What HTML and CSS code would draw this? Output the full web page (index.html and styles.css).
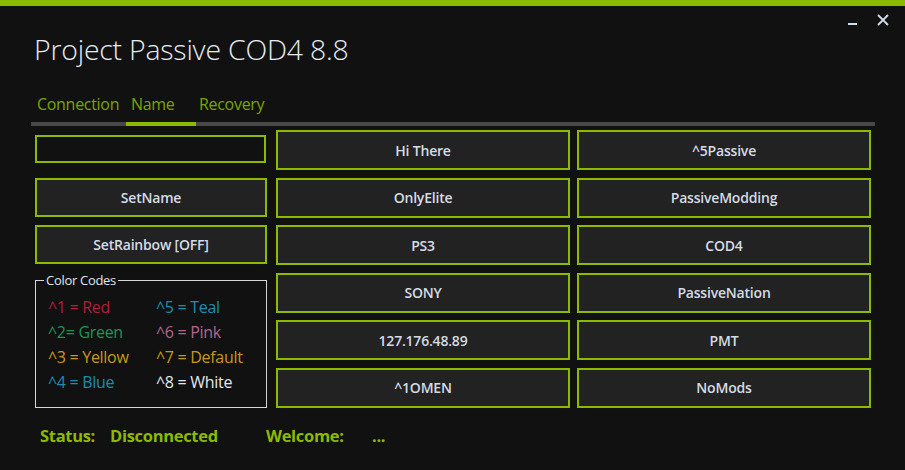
FILE: index.html
```html
<!DOCTYPE html>
<html>
<head>
<meta charset="utf-8">
<link rel="stylesheet" href="styles.css">
</head>
<body>
<div class="window">
  <div class="accent"></div>
  <header class="header">
    <h1 class="title">Project Passive COD4 8.8</h1>
    <div class="controls">
      <span class="ctl-min"></span>
      <svg class="ctl-close" width="12" height="12" viewBox="0 0 12 12"><path d="M1 1 L11 11 M11 1 L1 11" stroke="#d2dcec" stroke-width="1.8" fill="none"/></svg>
    </div>
  </header>
  <nav class="tabs">
    <div class="tab-row">
      <span class="tab tab-conn">Connection</span>
      <span class="tab tab-name active">Name</span>
      <span class="tab tab-rec">Recovery</span>
    </div>
    <div class="tab-line"><div class="tab-ind"></div></div>
  </nav>
  <main class="content">
    <div class="left">
      <input class="name-input" type="text">
      <button class="btn btn-left btn-setname">SetName</button>
      <button class="btn btn-left">SetRainbow [OFF]</button>
      <fieldset class="codes">
        <legend>Color Codes</legend>
        <div class="code-grid">
          <span class="c-red">^1 = Red</span>
          <span class="c-teal">^5 = Teal</span>
          <span class="c-green">^2= Green</span>
          <span class="c-pink">^6 = Pink</span>
          <span class="c-yellow">^3 = Yellow</span>
          <span class="c-yellow">^7 = Default</span>
          <span class="c-blue">^4 = Blue</span>
          <span class="c-white">^8 = White</span>
        </div>
      </fieldset>
    </div>
    <div class="presets">
      <button class="btn">Hi There</button>
      <button class="btn">^5Passive</button>
      <button class="btn">OnlyElite</button>
      <button class="btn">PassiveModding</button>
      <button class="btn">PS3</button>
      <button class="btn">COD4</button>
      <button class="btn">SONY</button>
      <button class="btn">PassiveNation</button>
      <button class="btn">127.176.48.89</button>
      <button class="btn">PMT</button>
      <button class="btn">^1OMEN</button>
      <button class="btn">NoMods</button>
    </div>
  </main>
  <footer class="status">
    <span class="s-label">Status:</span>
    <span class="s-value">Disconnected</span>
    <span class="s-label2">Welcome:</span>
    <span class="s-value2">...</span>
  </footer>
</div>
</body>
</html>
```
FILE: styles.css
```css
html, body {
  margin: 0;
  padding: 0;
  background: #111111;
}
body {
  width: 905px;
  height: 470px;
  overflow: hidden;
  font-family: "Open Sans", "Noto Sans", sans-serif;
}
.window {
  display: flex;
  flex-direction: column;
}
.accent {
  height: 6px;
  background: #8cba00;
}
.header {
  display: flex;
  justify-content: space-between;
  align-items: flex-start;
  padding-left: 34px;
  height: 80px;
}
.title {
  margin: 23px 0 0 0;
  font-weight: 300;
  font-size: 28.4px;
  line-height: 40px;
  color: #e6ecf2;
  letter-spacing: -0.2px;
}
.controls {
  display: flex;
  align-items: flex-start;
  gap: 20px;
  margin-top: 8px;
  margin-right: 16px;
}
.ctl-min {
  display: block;
  width: 9px;
  height: 2px;
  background: #d2dcec;
  margin-top: 9px;
}
.ctl-close {
  display: block;
}
.tabs {
  margin-left: 31px;
  width: 844px;
}
.tab-row {
  display: flex;
  height: 36px;
}
.tab {
  font-size: 16px;
  line-height: 36px;
  color: #7aa400;
  box-sizing: border-box;
  letter-spacing: -0.3px;
}
.tab-conn { width: 95px; padding-left: 6px; }
.tab-name { width: 70px; padding-left: 5px; }
.tab-rec { padding-left: 3px; }
.tab-line {
  height: 4px;
  background: #474747;
}
.tab-ind {
  margin-left: 95px;
  width: 70px;
  height: 4px;
  background: #8cba00;
}
.content {
  display: flex;
  padding-left: 35px;
  margin-top: 4px;
}
.left {
  width: 232px;
  margin-right: 9px;
  display: flex;
  flex-direction: column;
}
.btn {
  box-sizing: border-box;
  border: 2px solid #8cba00;
  background: #222222;
  color: #d4dce6;
  font-family: "Open Sans", "Noto Sans", sans-serif;
  font-weight: 600;
  font-size: 14px;
  letter-spacing: -0.2px;
  padding: 0;
  margin: 0;
}
.name-input {
  box-sizing: border-box;
  width: 231px;
  height: 28px;
  margin: 5px 0 0 0;
  border: 2px solid #8cba00;
  background: #111111;
  outline: none;
  padding: 0 4px;
  color: #d4dce6;
}
.btn-left {
  height: 39px;
  width: 232px;
}
.btn-setname {
  margin-top: 15px;
  margin-bottom: 8px;
}
.codes {
  margin: 9px 0 0 0;
  padding: 6px 0 0 12px;
  border: 1px solid #d6d6d6;
  box-sizing: border-box;
  height: 135px;
  min-inline-size: 0;
}
.codes legend {
  color: #dfe7ef;
  font-size: 13px;
  padding: 0 2px;
  margin-left: -4px;
  line-height: 14px;
  letter-spacing: -0.3px;
}
.code-grid {
  display: grid;
  grid-template-columns: 108px auto;
  font-size: 16px;
  line-height: 25px;
  font-weight: 400;
  letter-spacing: -0.3px;
  margin-top: 2px;
}
.c-red { color: #b01f3c; }
.c-teal { color: #1a8fb0; }
.c-green { color: #1b9552; }
.c-pink { color: #b0668f; }
.c-yellow { color: #c89a1a; }
.c-blue { color: #1a8fb0; }
.c-white { color: #e3e8ee; }
.presets {
  display: grid;
  grid-template-columns: 294px 294px;
  grid-auto-rows: 40px;
  column-gap: 7px;
  row-gap: 7.6px;
}
.status {
  display: flex;
  align-items: baseline;
  padding-left: 40px;
  margin-top: 16px;
  font-weight: 700;
  font-size: 16.5px;
  color: #8cba00;
  letter-spacing: -0.3px;
}
.s-label { width: 70px; }
.s-value { width: 156px; }
.s-label2 { width: 106px; }
```
